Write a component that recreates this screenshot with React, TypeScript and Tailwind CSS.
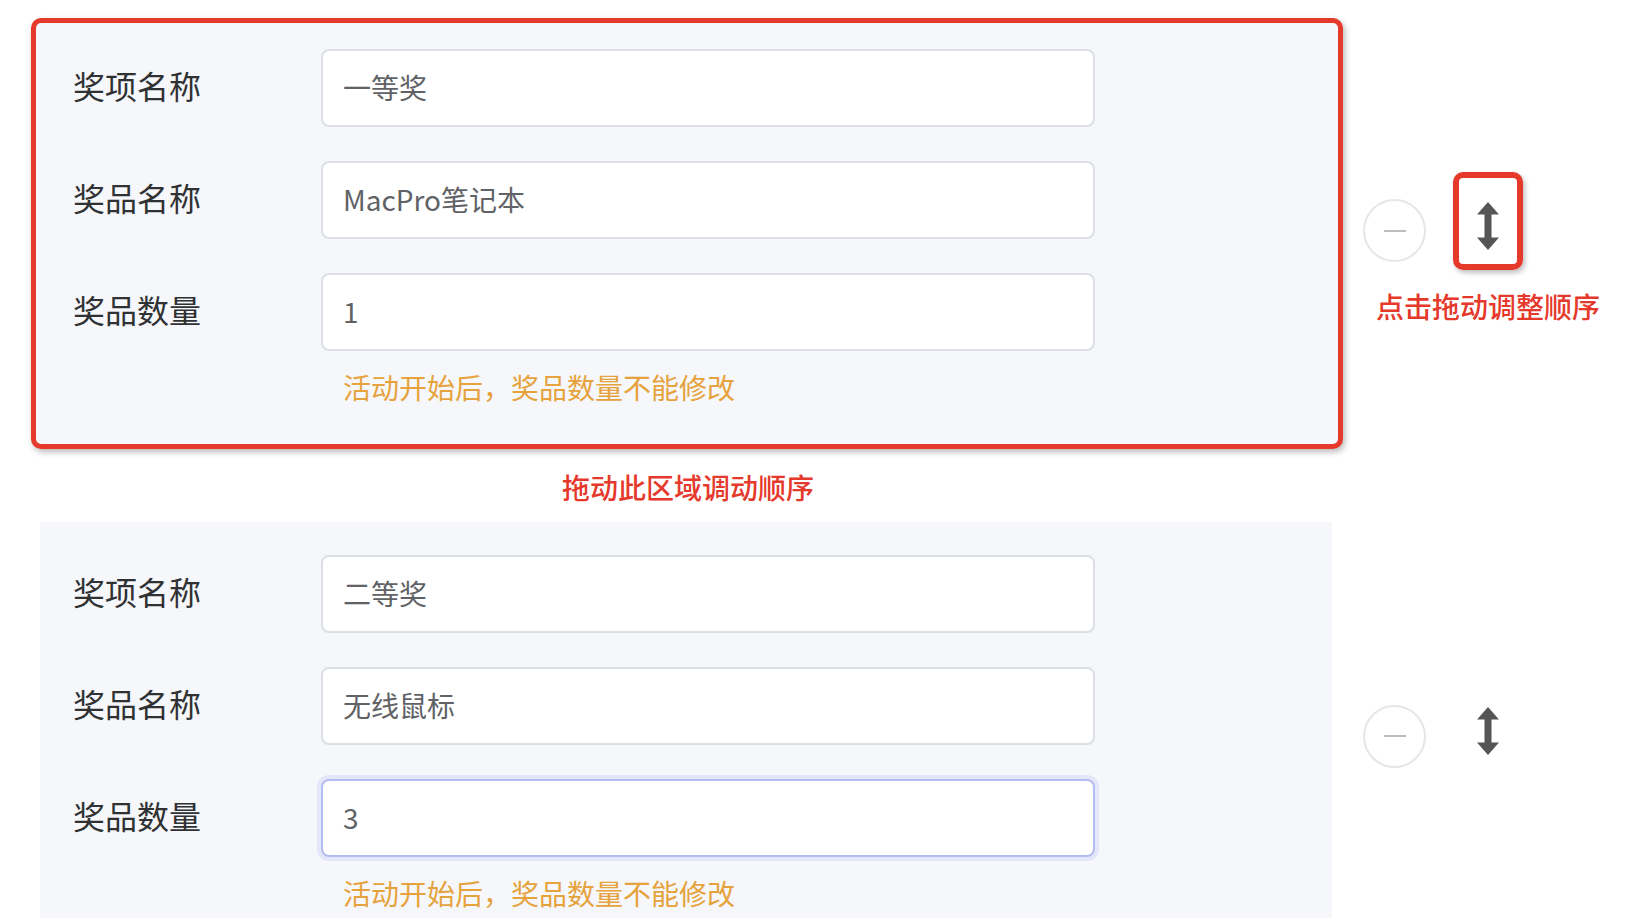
import * as React from "react";

const font = { fontFamily: '"Noto Sans CJK SC", "Noto Sans", sans-serif' };

type Prize = { level: string; name: string; count: string; focused?: boolean };

const prizes: Prize[] = [
  { level: "一等奖", name: "MacPro笔记本", count: "1" },
  { level: "二等奖", name: "无线鼠标", count: "3", focused: true },
];

function Field({ label, value, focused }: { label: string; value: string; focused?: boolean }) {
  return (
    <div className="flex h-[78px] items-center">
      <div className="w-[248px] shrink-0 pb-[6px] text-[32px] leading-none text-[#303133]">{label}</div>
      <input
        defaultValue={value}
        readOnly
        className={
          focused
            ? "h-[78px] w-[774px] rounded-[8px] border-2 border-[#b3bdf2] bg-white px-[20px] pb-[3px] text-[28px] text-[#606266] shadow-[0_0_0_4px_#e3e7f9] outline-none"
            : "h-[78px] w-[774px] rounded-[8px] border-2 border-[#dcdfe6] bg-white px-[20px] pb-[3px] text-[28px] text-[#606266] outline-none"
        }
      />
    </div>
  );
}

function PrizeForm({ prize }: { prize: Prize }) {
  return (
    <div className="flex flex-col gap-[34px]">
      <Field label="奖项名称" value={prize.level} />
      <Field label="奖品名称" value={prize.name} />
      <div>
        <Field label="奖品数量" value={prize.count} focused={prize.focused} />
        <p className="mt-[18px] pl-[270px] text-[28px] leading-[36px] text-[#e6a23c]">
          活动开始后，奖品数量不能修改
        </p>
      </div>
    </div>
  );
}

function UpDownArrow() {
  return (
    <svg width="22" height="48" viewBox="0 0 22 48">
      <path d="M11 0 L22 12.5 H14.5 V35.5 H22 L11 48 L0 35.5 H7.5 V12.5 H0 Z" fill="#555555" />
    </svg>
  );
}

function Actions({ highlight }: { highlight?: boolean }) {
  return (
    <div className={highlight ? "-mt-[6px] flex items-center" : "flex items-center"}>
      <button className="flex h-[63px] w-[63px] items-center justify-center rounded-full border-2 border-[#e6e6e6] bg-white">
        <span className="block h-[2px] w-[22px] bg-[#bdbdbd]" />
      </button>
      <div
        className={
          highlight
            ? "relative mb-[20px] ml-[27px] flex h-[98px] w-[70px] justify-center rounded-[10px] border-[6px] border-[#e5392c] pt-[24px] shadow-[2px_3px_5px_rgba(0,0,0,0.25)]"
            : "relative mb-[20px] ml-[27px] flex h-[98px] w-[70px] justify-center border-[6px] border-transparent pt-[24px]"
        }
      >
        <UpDownArrow />
        {highlight && (
          <span className="absolute left-1/2 top-full mt-[24px] -translate-x-1/2 whitespace-nowrap text-[28px] font-medium leading-[36px] text-[#e5392c]">
            点击拖动调整顺序
          </span>
        )}
      </div>
    </div>
  );
}

export default function App() {
  return (
    <div className="h-[918px] overflow-hidden bg-white" style={font}>
      {/* first item, outlined by the annotation */}
      <div className="flex items-center pt-[18px]">
        <div className="w-[1363px] shrink-0 pl-[31px]">
          <div className="w-[1312px] rounded-[10px] border-[5px] border-[#e5392c] bg-[#f5f7fa] pb-[39px] pl-[37px] pt-[26px] shadow-[2px_3px_6px_rgba(0,0,0,0.28)]">
            <PrizeForm prize={prizes[0]} />
          </div>
        </div>
        <Actions highlight />
      </div>

      <div className="w-[1376px] pb-[17px] pt-[20px] text-center text-[28px] font-medium leading-[36px] text-[#e5392c]">
        拖动此区域调动顺序
      </div>

      <div className="flex items-center">
        <div className="w-[1363px] shrink-0 pl-[40px]">
          <div className="w-[1292px] bg-[#f5f7fa] pb-[39px] pl-[33px] pt-[33px]">
            <PrizeForm prize={prizes[1]} />
          </div>
        </div>
        <Actions />
      </div>
    </div>
  );
}
